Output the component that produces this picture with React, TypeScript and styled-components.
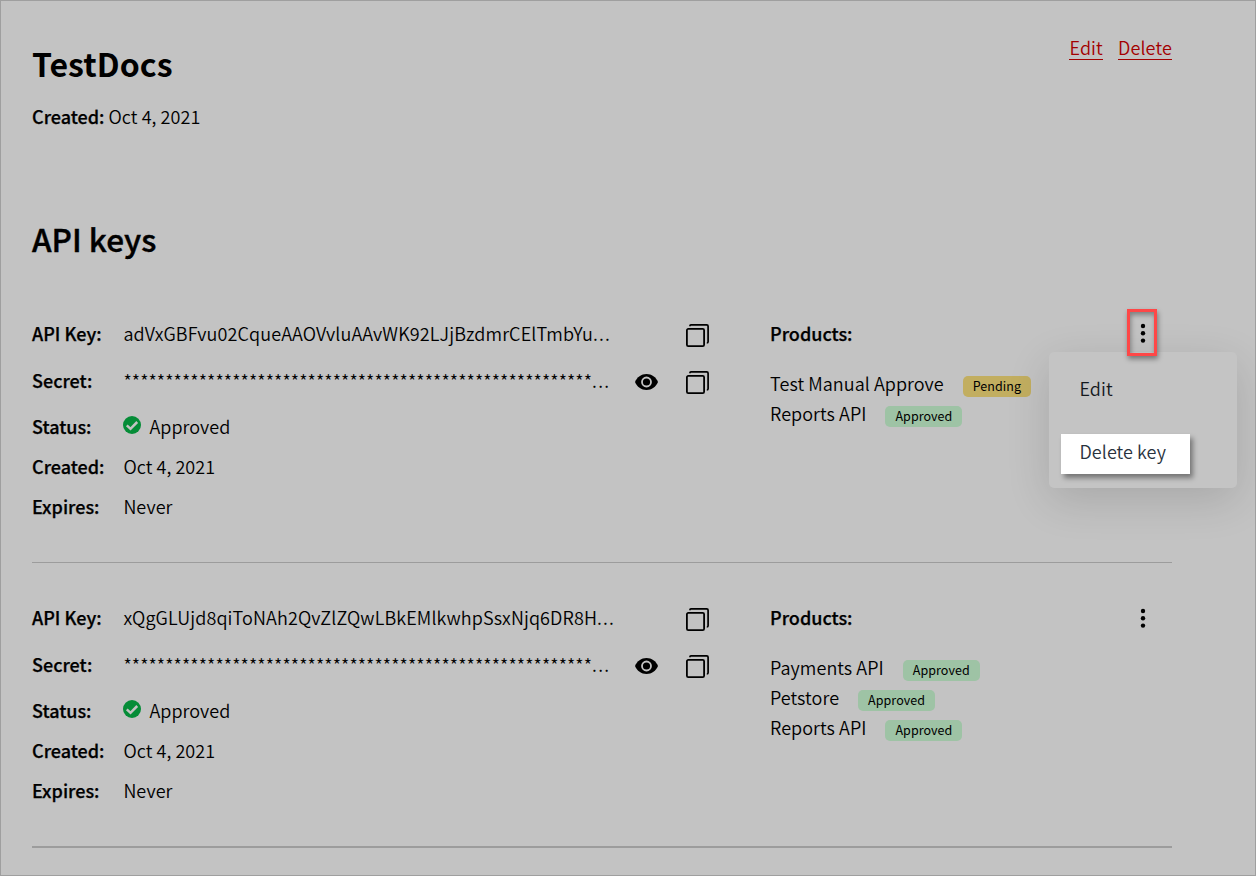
import React from 'react';
import styled, { createGlobalStyle } from 'styled-components';

const GlobalStyle = createGlobalStyle`
  *, *::before, *::after { box-sizing: border-box; }
  body {
    margin: 0;
    background: #c3c3c3;
    color: #000;
    font-family: "Noto Sans CJK SC", "Noto Sans", sans-serif;
    font-size: 18px;
    font-weight: 350;
    letter-spacing: 0.06px;
    line-height: 30px;
  }
`;

const Page = styled.main`
  width: 1256px;
  height: 876px;
  overflow: hidden;
  border: 1px solid #9f9f9f;
  padding: 29px 83px 0 31px;
`;

const Header = styled.header`
  display: flex;
  justify-content: space-between;
  align-items: flex-start;
  height: 71px;
`;

const Title = styled.h1`
  margin: 9px 0 0;
  font-size: 32px;
  line-height: 48px;
  font-weight: 700;
`;

const SectionTitle = styled.h2`
  margin: 83px 0 0;
  font-size: 31.5px;
  line-height: 48px;
  font-weight: 500;
  letter-spacing: 0;
  -webkit-text-stroke: 0.4px #000;
`;

const Actions = styled.nav`
  display: flex;
  gap: 15px;
  padding-top: 6px;
`;

const ActionLink = styled.a`
  height: 24px;
  line-height: 22px;
  letter-spacing: 0.15px;
  color: #a30000;
  border-bottom: 1px solid #a30000;
`;

const Label = styled.span`
  font-weight: 500;
  letter-spacing: 0;
  -webkit-text-stroke: 0.25px #000;
`;

const Created = styled.p`
  margin: 0;
`;

const KeyBlock = styled.section<{ $rule: number }>`
  display: flex;
  height: ${(p) => 283 + p.$rule}px;
  border-bottom: ${(p) => p.$rule}px solid #9c9c9c;
`;

const KeyList = styled.div`
  margin-top: 17px;
`;

const Details = styled.div`
  width: 738px;
  padding-top: 39px;
`;

const Row = styled.div<{ $h: number }>`
  display: grid;
  grid-template-columns: 91.4px 511.6px 51px 40px;
  height: ${(p) => p.$h}px;
`;

const Value = styled.span`
  white-space: nowrap;
`;

const KeyText = styled.span`
  letter-spacing: 0.11px;
`;

const Stars = styled.span`
  letter-spacing: 0.09px;
`;

const Dots = styled.span`
  letter-spacing: 1.2px;
`;

const IconCell = styled.span<{ $lift?: boolean }>`
  display: flex;
  align-items: center;
  height: ${(p) => (p.$lift ? 33 : 35)}px;
  svg { display: block; }
`;

const Status = styled.span`
  display: flex;
  gap: 8px;
  svg { margin-top: 5px; }
`;

const Products = styled.div`
  width: 402px;
  padding-top: 39px;
`;

const ProductsHead = styled.div`
  display: flex;
  justify-content: space-between;
  position: relative;
  height: 50px;
`;

const Product = styled.div`
  display: flex;
  align-items: flex-start;
  height: 30px;
  gap: 19px;
`;

const Badge = styled.span<{ $tone: 'ok' | 'wait' }>`
  height: 21px;
  margin-top: 8px;
  padding: 0 10px;
  border-radius: 5px;
  font-size: 12.5px;
  font-weight: 400;
  line-height: 20px;
  background: ${(p) => (p.$tone === 'ok' ? '#9ec3a5' : '#c2ae60')};
`;

const More = styled.button<{ $active?: boolean }>`
  position: relative;
  z-index: 2;
  display: flex;
  align-items: center;
  justify-content: center;
  width: 30px;
  height: 47px;
  margin: ${(p) => (p.$active ? -9 : -8)}px 15px 0 0;
  padding: 0 0 0 2px;
  background: none;
  border: 3px solid ${(p) => (p.$active ? '#fe4747' : 'transparent')};
  box-shadow: ${(p) => (p.$active ? '1px 3px 5px rgba(0,0,0,.4), inset 1px 3px 5px rgba(0,0,0,.35)' : 'none')};
`;

const Menu = styled.div`
  position: absolute;
  z-index: 1;
  top: 34px;
  left: 279px;
  width: 188px;
  height: 136px;
  padding: 22px 12px 0;
  border-radius: 5px;
  background: #c4c4c4;
  box-shadow: 0 12px 44px rgba(0, 0, 0, 0.14);
  color: #14181d;
`;

const MenuItem = styled.div<{ $lit?: boolean }>`
  width: 129px;
  height: ${(p) => (p.$lit ? 40 : 30)}px;
  margin-top: ${(p) => (p.$lit ? 30 : 0)}px;
  padding-left: 18.500px;
  line-height: ${(p) => (p.$lit ? 35 : 28)}px;
  color: ${(p) => (p.$lit ? '#29323d' : '#14181d')};
  background: ${(p) => (p.$lit ? '#fff' : 'none')};
  box-shadow: ${(p) => (p.$lit ? '3px 4px 5px rgba(0,0,0,.4)' : 'none')};
`;

const CopyIcon = () => (
  <svg width="23" height="23" viewBox="0 0 23 23" fill="none" stroke="#000">
    <rect x="0.9" y="4.900" width="17.200" height="17.200" rx="1.400" strokeWidth="1.800" />
    <path d="M4 2.200V2Q4 0.900 5 0.900H20.700Q22.100 0.900 22.100 2.200V17.800Q22.100 19 20.800 19" strokeWidth="1.700" />
  </svg>
);

const EyeIcon = () => (
  <svg width="23" height="16" viewBox="0 0 23 16">
    <path d="M11.5 0C6.3 0 2 3.2 0 8c2 4.8 6.3 8 11.5 8S21 12.800 23 8C21 3.200 16.700 0 11.500 0z" />
    <circle cx="11.500" cy="8" r="4.500" fill="none" stroke="#c3c3c3" strokeWidth="1.800" />
  </svg>
);

const CheckIcon = () => (
  <svg width="18" height="18" viewBox="0 0 18 18">
    <circle cx="9" cy="9" r="9" fill="#058c37" />
    <path d="M3.800 9.300L7.500 12.800L14.200 6" fill="none" stroke="#c3c3c3" strokeWidth="2.500" />
  </svg>
);

const DotsIcon = () => (
  <svg width="6" height="20" viewBox="0 0 6 20">
    <circle cx="3" cy="3" r="2.200" />
    <circle cx="3" cy="10.300" r="2.200" />
    <circle cx="3" cy="17.600" r="2.200" />
  </svg>
);

type ProductInfo = { name: string; status: 'Approved' | 'Pending' };
type KeyInfo = { id: string; products: ProductInfo[]; open?: boolean };

const keys: KeyInfo[] = [
  {
    id: 'adVxGBFvu02CqueAAOVvluAAvWK92LJjBzdmrCElTmbYu',
    open: true,
    products: [
      { name: 'Test Manual Approve', status: 'Pending' },
      { name: 'Reports API', status: 'Approved' },
    ],
  },
  {
    id: 'xQgGLUjd8qiToNAh2QvZlZQwLBkEMlkwhpSsxNjq6DR8H',
    products: [
      { name: 'Payments API', status: 'Approved' },
      { name: 'Petstore', status: 'Approved' },
      { name: 'Reports API', status: 'Approved' },
    ],
  },
];

export default function App() {
  return (
    <Page>
      <GlobalStyle />
      <Header>
        <Title>TestDocs</Title>
        <Actions>
          <ActionLink>Edit</ActionLink>
          <ActionLink>Delete</ActionLink>
        </Actions>
      </Header>
      <Created>
        <Label>Created:</Label> Oct 4, 2021
      </Created>
      <SectionTitle>API keys</SectionTitle>
      <KeyList>
        {keys.map((k, i) => (
          <KeyBlock key={k.id} $rule={i + 1}>
            <Details>
              <Row $h={47}>
                <Label>API Key:</Label>
                <Value><KeyText>{k.id}</KeyText><Dots>...</Dots></Value>
                <span />
                <IconCell><CopyIcon /></IconCell>
              </Row>
              <Row $h={46}>
                <Label>Secret:</Label>
                <Value><Stars>{'*'.repeat(56)}</Stars><Dots>...</Dots></Value>
                <IconCell $lift><EyeIcon /></IconCell>
                <IconCell><CopyIcon /></IconCell>
              </Row>
              <Row $h={40}>
                <Label>Status:</Label>
                <Status><CheckIcon />Approved</Status>
              </Row>
              <Row $h={40}>
                <Label>Created:</Label>
                <Value>Oct 4, 2021</Value>
              </Row>
              <Row $h={40}>
                <Label>Expires:</Label>
                <Value>Never</Value>
              </Row>
            </Details>
            <Products>
              <ProductsHead>
                <Label>Products:</Label>
                <More $active={k.open} aria-label="More actions"><DotsIcon /></More>
                {k.open && (
                  <Menu>
                    <MenuItem>Edit</MenuItem>
                    <MenuItem $lit>Delete key</MenuItem>
                  </Menu>
                )}
              </ProductsHead>
              {k.products.map((p) => (
                <Product key={p.name}>
                  <span>{p.name}</span>
                  <Badge $tone={p.status === 'Pending' ? 'wait' : 'ok'}>{p.status}</Badge>
                </Product>
              ))}
            </Products>
          </KeyBlock>
        ))}
      </KeyList>
    </Page>
  );
}
